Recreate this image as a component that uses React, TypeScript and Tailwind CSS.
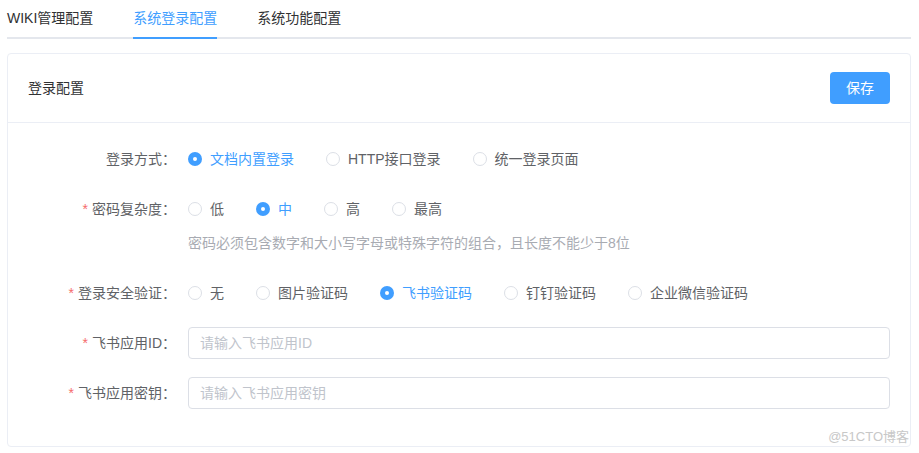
import React from "react";

const FONT = { fontFamily: '"Liberation Sans", "Noto Sans CJK SC", sans-serif' };

type Opt = { label: string; checked?: boolean };

function Radio({ label, checked }: Opt) {
  return (
    <label className="mr-[32px] flex items-center cursor-pointer whitespace-nowrap">
      {checked ? (
        <span className="flex h-[14px] w-[14px] items-center justify-center rounded-full bg-[#409EFF]">
          <span className="h-[4px] w-[4px] rounded-full bg-white" />
        </span>
      ) : (
        <span className="h-[14px] w-[14px] rounded-full border border-[#DCDFE6] bg-white" />
      )}
      <span className={"pl-[8px] text-[14px] leading-[32px] " + (checked ? "text-[#409EFF]" : "text-[#606266]")}>
        {label}
      </span>
    </label>
  );
}

function Label({ text, required }: { text: string; required?: boolean }) {
  return (
    <div className="w-[160px] shrink-0 pr-[12px] text-right text-[14px] leading-[32px] text-[#606266]">
      {required && <span className="mr-[4px] text-[#F56C6C]">*</span>}
      {text}
    </div>
  );
}

export default function App() {
  return (
    <div className="relative min-h-[453px] w-[919px] bg-white pl-[7px] pr-[8px]" style={FONT}>
      {/* tabs */}
      <div className="flex h-[39px] border-b-2 border-[#E4E7ED] text-[14px]">
        <div className="-mb-[2px] mr-[40px] h-[39px] border-b-2 border-transparent leading-[37px] text-[#303133]">WIKI管理配置</div>
        <div className="-mb-[2px] mr-[40px] h-[39px] border-b-2 border-[#409EFF] leading-[37px] text-[#409EFF]">系统登录配置</div>
        <div className="-mb-[2px] h-[39px] border-b-2 border-transparent leading-[37px] text-[#303133]">系统功能配置</div>
      </div>

      {/* card */}
      <div className="mt-[14px] rounded-[4px] border border-[#EBEEF5] bg-white">
        <div className="flex items-center justify-between border-b border-[#EBEEF5] px-[20px] py-[18px]">
          <span className="text-[14px] text-[#303133]">登录配置</span>
          <button className="h-[32px] w-[60px] rounded-[4px] bg-[#409EFF] text-[14px] text-white">保存</button>
        </div>

        <div className="px-[20px] pt-[20px] pb-[19px]">
          <div className="mb-[18px] flex">
            <Label text="登录方式：" />
            <div className="flex items-center">
              <Radio label="文档内置登录" checked />
              <Radio label="HTTP接口登录" />
              <Radio label="统一登录页面" />
            </div>
          </div>

          <div className="mb-[24px] flex">
            <Label text="密码复杂度：" required />
            <div>
              <div className="flex items-center">
                <Radio label="低" />
                <Radio label="中" checked />
                <Radio label="高" />
                <Radio label="最高" />
              </div>
              <div className="pt-[8px] text-[14px] leading-[20px] text-[#A8ABB2]">
                密码必须包含数字和大小写字母或特殊字符的组合，且长度不能少于8位
              </div>
            </div>
          </div>

          <div className="mb-[18px] flex">
            <Label text="登录安全验证：" required />
            <div className="flex items-center">
              <Radio label="无" />
              <Radio label="图片验证码" />
              <Radio label="飞书验证码" checked />
              <Radio label="钉钉验证码" />
              <Radio label="企业微信验证码" />
            </div>
          </div>

          <div className="mb-[18px] flex">
            <Label text="飞书应用ID：" required />
            <input
              className="h-[32px] flex-1 rounded-[4px] border border-[#DCDFE6] pl-[11px] text-[14px] text-[#606266] outline-none placeholder:text-[#C0C4CC]"
              placeholder="请输入飞书应用ID"
              style={FONT}
            />
          </div>

          <div className="mb-[18px] flex">
            <Label text="飞书应用密钥：" required />
            <input
              className="h-[32px] flex-1 rounded-[4px] border border-[#DCDFE6] pl-[11px] text-[14px] text-[#606266] outline-none placeholder:text-[#C0C4CC]"
              placeholder="请输入飞书应用密钥"
              style={FONT}
            />
          </div>
        </div>
      </div>

      <div className="absolute right-[10px] top-[428px] text-[13px] leading-[18px] text-[#C8C8C8]">@51CTO博客</div>
    </div>
  );
}
